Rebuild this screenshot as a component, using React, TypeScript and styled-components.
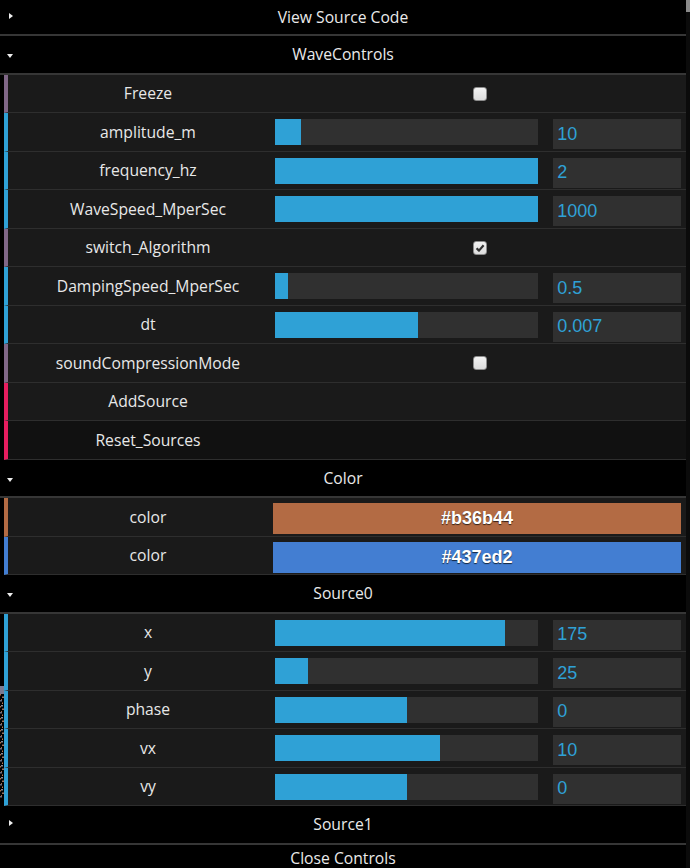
import React from "react";
import styled, { createGlobalStyle } from "styled-components";

const GlobalStyle = createGlobalStyle`
  html, body { margin: 0; padding: 0; background: #000; }
  body { font-family: "Segoe UI", "Open Sans", "Noto Sans", sans-serif; }
  * { box-sizing: border-box; }
`;

const Panel = styled.div`
  width: 690px;
  height: 868px;
  overflow: hidden;
  display: flex;
  background: #000;
`;

const Main = styled.div`
  flex: 1;
  min-width: 0;
  display: flex;
  flex-direction: column;
`;

const ScrollTrack = styled.div`
  width: 4px;
  flex: none;
  background: #0b0b0b;
  display: flex;
  flex-direction: column;
`;

const ScrollThumb = styled.div`
  height: 12px;
  background: #8a8a8a;
`;

const Title = styled.div<{ $h?: number }>`
  position: relative;
  height: ${(p) => p.$h ?? 38.5}px;
  flex: none;
  background: #000;
  border-bottom: 2px solid #363636;
  color: #eaeaea;
  font-size: 15.7px;
  display: flex;
  align-items: center;
  justify-content: center;
`;

const Arrow = styled.span<{ $open: boolean }>`
  position: absolute;
  left: ${(p) => (p.$open ? 7 : 9)}px;
  top: 50%;
  width: 0;
  height: 0;
  ${(p) =>
    p.$open
      ? `border-left: 3px solid transparent; border-right: 3px solid transparent; border-top: 4px solid #eee; margin-top: 0px;`
      : `border-top: 3px solid transparent; border-bottom: 3px solid transparent; border-left: 4px solid #eee; margin-top: -4px;`}
`;

const FolderBody = styled.div`
  display: flex;
  flex: none;
`;

const Gutter = styled.div`
  width: 4px;
  flex: none;
  background: #000;
  overflow: hidden;
  display: flex;
  flex-direction: column;
`;

const List = styled.div`
  flex: 1;
  min-width: 0;
  display: flex;
  flex-direction: column;
`;

const Row = styled.div<{ $accent: string; $dark?: boolean }>`
  height: 38.5px;
  flex: none;
  display: flex;
  align-items: center;
  border-left: 4px solid ${(p) => p.$accent};
  border-bottom: 1px solid #2e2e2e;
  background: ${(p) => (p.$dark ? "#111" : "#1a1a1a")};
  padding: 0 6px 0 7px;
`;

const Label = styled.div`
  width: 40%;
  flex: none;
  text-align: center;
  color: #e8e8e8;
  font-size: 15.7px;
  white-space: nowrap;
`;

const Control = styled.div<{ $center?: boolean }>`
  width: 60%;
  flex: none;
  height: 100%;
  display: flex;
  align-items: ${(p) => (p.$center ? "center" : "flex-start")};
  justify-content: ${(p) => (p.$center ? "center" : "space-between")};
`;

const SliderTrack = styled.div`
  width: 66%;
  margin-left: -6px;
  margin-top: 6px;
  height: 26px;
  background: #303030;
  display: flex;
`;

const SliderFill = styled.div`
  height: 100%;
  background: #2fa1d6;
`;

const NumberBox = styled.div`
  width: 32%;
  margin-top: 6px;
  margin-right: -1px;
  height: 30px;
  background: #303030;
  color: #2fa1d6;
  font-family: "Liberation Sans", Arial, sans-serif;
  font-size: 18px;
  padding-left: 4px;
  display: flex;
  align-items: center;
`;

const Check = styled.span`
  width: 14px;
  height: 14px;
  margin-left: -1px;
  margin-top: 1px;
  border-radius: 3px;
  border: 1px solid #8c8c8c;
  background: linear-gradient(#f2f2f2, #dcdcdc);
  display: flex;
  align-items: center;
  justify-content: center;
`;

const ColorField = styled.div<{ $c: string }>`
  margin-left: -8px;
  margin-right: -1px;
  margin-top: 5px;
  width: 409px;
  height: 31px;
  background: ${(p) => p.$c};
  color: #fff;
  font-family: "Liberation Sans", Arial, sans-serif;
  font-weight: bold;
  font-size: 18px;
  text-shadow: 0 1px 1px rgba(0, 0, 0, 0.7);
  display: flex;
  align-items: center;
  justify-content: center;
`;

const CloseBar = styled.div`
  height: 27px;
  flex: none;
  background: #000;
  color: #eaeaea;
  font-size: 15.7px;
  display: flex;
  align-items: center;
  justify-content: center;
`;

const NUM = "#2fa1d6";
const BOOL = "#806787";
const FUNC = "#e61d5f";

type Item =
  | { kind: "num"; label: string; frac: number; value: string }
  | { kind: "bool"; label: string; checked: boolean }
  | { kind: "func"; label: string; dark?: boolean }
  | { kind: "color"; label: string; color: string };

const waveItems: Item[] = [
  { kind: "bool", label: "Freeze", checked: false },
  { kind: "num", label: "amplitude_m", frac: 0.099, value: "10" },
  { kind: "num", label: "frequency_hz", frac: 1, value: "2" },
  { kind: "num", label: "WaveSpeed_MperSec", frac: 1, value: "1000" },
  { kind: "bool", label: "switch_Algorithm", checked: true },
  { kind: "num", label: "DampingSpeed_MperSec", frac: 0.05, value: "0.5" },
  { kind: "num", label: "dt", frac: 0.544, value: "0.007" },
  { kind: "bool", label: "soundCompressionMode", checked: false },
  { kind: "func", label: "AddSource" },
  { kind: "func", label: "Reset_Sources", dark: true },
];

const colorItems: Item[] = [
  { kind: "color", label: "color", color: "#b36b44" },
  { kind: "color", label: "color", color: "#437ed2" },
];

const sourceItems: Item[] = [
  { kind: "num", label: "x", frac: 0.875, value: "175" },
  { kind: "num", label: "y", frac: 0.125, value: "25" },
  { kind: "num", label: "phase", frac: 0.5, value: "0" },
  { kind: "num", label: "vx", frac: 0.625, value: "10" },
  { kind: "num", label: "vy", frac: 0.5, value: "0" },
];

function CheckMark() {
  return (
    <svg width="10" height="10" viewBox="0 0 10 10">
      <path d="M1.6 5.2 L4 7.6 L8.6 2.2" fill="none" stroke="#333" strokeWidth="2.2" strokeLinejoin="round" />
    </svg>
  );
}

function ControllerRow({ item }: { item: Item }) {
  switch (item.kind) {
    case "num":
      return (
        <Row $accent={NUM}>
          <Label>{item.label}</Label>
          <Control>
            <SliderTrack>
              <SliderFill style={{ width: `${item.frac * 100}%` }} />
            </SliderTrack>
            <NumberBox>{item.value}</NumberBox>
          </Control>
        </Row>
      );
    case "bool":
      return (
        <Row $accent={BOOL}>
          <Label>{item.label}</Label>
          <Control $center>
            <Check>{item.checked && <CheckMark />}</Check>
          </Control>
        </Row>
      );
    case "func":
      return (
        <Row $accent={FUNC} $dark={item.dark}>
          <Label>{item.label}</Label>
        </Row>
      );
    case "color":
      return (
        <Row $accent={item.color}>
          <Label>{item.label}</Label>
          <Control>
            <ColorField $c={item.color}>{item.color}</ColorField>
          </Control>
        </Row>
      );
  }
}

const noiseColors = ["#b07048", "#8a8a96", "#c07a50", "#6f6f80", "#a86a44", "#9a7060"];
const noise = Array.from({ length: 52 }, (_, i) => ({
  x: (i * 5) % 3,
  y: 2 + i * 2 + ((i * 7) % 3) * 0.5,
  w: 1 + ((i * 3) % 2),
  c: noiseColors[(i * 5) % noiseColors.length],
}));

function NoiseStrip() {
  return (
    <svg width="4" height="190" viewBox="0 0 4 190" style={{ display: "block", flex: "none" }}>
      <rect x="0" y="72" width="4" height="8" fill="#7c7c92" />
      {noise.map((n, i) => (
        <rect key={i} x={n.x} y={n.y + 78} width={n.w} height={1.5} fill={n.c} />
      ))}
    </svg>
  );
}

function Folder({
  title,
  items,
  noiseGutter,
}: {
  title: string;
  items: Item[];
  noiseGutter?: boolean;
}) {
  return (
    <>
      <Title>
        <Arrow $open />
        {title}
      </Title>
      <FolderBody>
        <Gutter>{noiseGutter && <NoiseStrip />}</Gutter>
        <List>
          {items.map((it, i) => (
            <ControllerRow key={i} item={it} />
          ))}
        </List>
      </FolderBody>
    </>
  );
}

export default function App() {
  return (
    <>
      <GlobalStyle />
      <Panel>
        <Main>
          <Title $h={36}>
            <Arrow $open={false} />
            View Source Code
          </Title>
          <Folder title="WaveControls" items={waveItems} />
          <Folder title="Color" items={colorItems} />
          <Folder title="Source0" items={sourceItems} noiseGutter />
          <Title>
            <Arrow $open={false} />
            Source1
          </Title>
          <CloseBar>Close Controls</CloseBar>
        </Main>
        <ScrollTrack>
          <ScrollThumb />
        </ScrollTrack>
      </Panel>
    </>
  );
}
